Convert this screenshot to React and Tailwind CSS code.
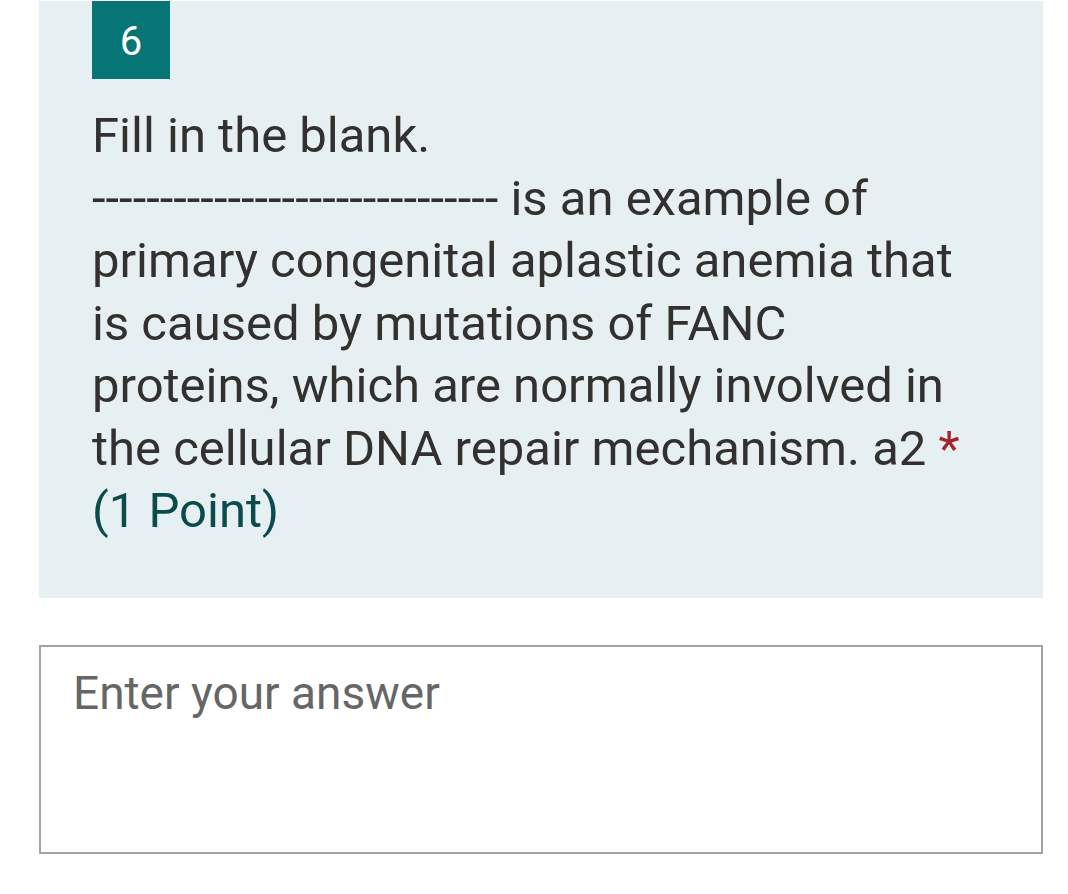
export default function App() {
  const font = { fontFamily: 'Roboto, "Liberation Sans", sans-serif' };

  return (
    <div className="w-[1068px] h-[894px] bg-white" style={font}>
      <div className="ml-[39px] mr-[25px] mt-px bg-[#e6eff2] h-[597px] pl-[53px] pr-[68px]">
        <div className="w-[78px] h-[78px] bg-[#077575] flex items-center justify-center text-white text-[40px] leading-none pt-[3px]">
          6
        </div>
        <div className="mt-[26px] text-[49px] leading-[62.5px] text-[#323130]">
          <p>Fill in the blank.</p>
          <p>
            ------------------------------ is an example of primary congenital
            aplastic anemia that is caused by mutations of FANC proteins, which
            are normally involved in the cellular DNA repair mechanism. a2{' '}
            <span className="text-[#a4262c]">*</span>
          </p>
          <p className="text-[#0b4b4b]">(1 Point)</p>
        </div>
      </div>

      <div className="ml-[39px] mr-[25px] mt-[47px] h-[209px] border-2 border-[#a3a3a3] bg-white px-[32px] pt-[18px]">
        <input
          type="text"
          placeholder="Enter your answer"
          className="w-full bg-transparent outline-none text-[46px] leading-[57px] text-[#333] placeholder:text-[#666]"
          style={font}
        />
      </div>
    </div>
  );
}
